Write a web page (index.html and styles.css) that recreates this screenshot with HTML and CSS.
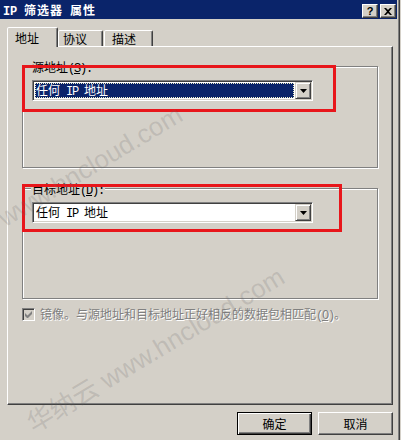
FILE: index.html
```html
<!DOCTYPE html>
<html lang="zh-CN">
<head>
<meta charset="utf-8">
<title>IP 筛选器 属性</title>
<link rel="stylesheet" href="styles.css">
</head>
<body>
<div class="window">
  <div class="titlebar">
    <span class="title"><span class="latin">IP </span>筛选器<span class="latin"> </span>属性</span>
    <div class="caption-btns">
      <span class="cbtn cbtn-help">?</span>
      <span class="cbtn cbtn-close"><svg width="8" height="7" viewBox="0 0 8 7"><path d="M0 0h2l2 2 2-2h2L5 3.5 8 7H6L4 5 2 7H0l3-3.5z" fill="#000"/></svg></span>
    </div>
  </div>
  <div class="content">
    <div class="tabs">
      <div class="tab tab-active t1">地址</div>
      <div class="tab t2">协议</div>
      <div class="tab t3">描述</div>
    </div>
    <div class="panel">
      <div class="group g1">
        <span class="legend">源地址<span class="latin">(<u>S</u>):</span></span>
        <div class="combo">
          <div class="field field-focused"><span class="value">任何<span class="latin"> IP </span>地址</span></div>
          <span class="dropbtn"><svg width="7" height="4" viewBox="0 0 7 4"><path d="M0 0h7L3.5 4z" fill="#000"/></svg></span>
        </div>
      </div>
      <div class="group g2">
        <span class="legend">目标地址<span class="latin">(<u>D</u>):</span></span>
        <div class="combo">
          <div class="field"><span class="value">任何<span class="latin"> IP </span>地址</span></div>
          <span class="dropbtn"><svg width="7" height="4" viewBox="0 0 7 4"><path d="M0 0h7L3.5 4z" fill="#000"/></svg></span>
        </div>
      </div>
      <div class="check-row">
        <span class="checkbox"><svg width="7" height="7" viewBox="0 0 7 7"><path d="M0 2v3l2 2h1l4-4V0L2.5 4.5z" fill="#808080"/></svg></span>
        <span class="check-label">镜像。与源地址和目标地址正好相反的数据包相匹配<span class="latin">(<u>O</u>)</span>。</span>
      </div>
    </div>
    <div class="actions">
      <button class="btn btn-default">确定</button>
      <button class="btn">取消</button>
    </div>
  </div>
  <div class="mark mark-1"></div>
  <div class="mark mark-2"></div>
  <span class="wm wm-1">www.hncloud.com</span>
  <span class="wm wm-2">华纳云 www.hncloud.com</span>
</div>
</body>
</html>
```
FILE: styles.css
```css
html, body {
  margin: 0;
  padding: 0;
  background: #d4d0c8;
}
body {
  font-family: "Noto Sans CJK SC", "Liberation Sans", sans-serif;
  font-size: 12px;
  color: #000;
}
.latin {
  font-family: "Liberation Mono", monospace;
  letter-spacing: -1.2px;
  white-space: pre;
}
.window {
  position: relative;
  width: 401px;
  height: 440px;
  overflow: hidden;
  background: #d4d0c8;
  box-shadow: inset -1px 0 0 #d4d0c8, inset -2px 0 0 #404040, inset -3px 0 0 #808080;
}
.titlebar {
  display: flex;
  justify-content: space-between;
  align-items: flex-start;
  height: 19px;
  margin-right: 4px;
  padding-left: 3px;
  padding-right: 1px;
  background: #0a246a;
}
.title {
  color: #fff;
  font-weight: bold;
  font-size: 12px;
  line-height: 19px;
  letter-spacing: 1px;
  white-space: nowrap;
}
.title .latin {
  letter-spacing: -0.2px;
}
.caption-btns {
  display: flex;
  gap: 2px;
  padding-top: 4px;
}
.cbtn {
  box-sizing: border-box;
  width: 16px;
  height: 14px;
  display: flex;
  align-items: center;
  justify-content: center;
  background: #d4d0c8;
  border: 1px solid;
  border-color: #fff #404040 #404040 #fff;
  box-shadow: inset -1px -1px 0 #808080;
  font-family: "Liberation Sans", sans-serif;
  font-weight: bold;
  font-size: 11px;
  line-height: 12px;
}
.content {
  padding-top: 8px;
}
.tabs {
  position: relative;
  z-index: 1;
  display: flex;
  align-items: flex-end;
  height: 20px;
  margin-left: 7px;
  margin-bottom: -1px;
}
.tab {
  box-sizing: border-box;
  height: 16px;
  margin-bottom: 1px;
  padding-top: 1px;
  background: #d4d0c8;
  border: 1px solid;
  border-bottom: none;
  border-color: #fff #404040 transparent #fff;
  border-radius: 2px 2px 0 0;
  box-shadow: inset -1px 0 0 #808080;
  line-height: 14px;
  white-space: nowrap;
}
.tab-active {
  height: 20px;
  margin-bottom: 0;
  padding-top: 3px;
}
.t1 { width: 51px; padding-left: 7px; }
.t2 { width: 45px; padding-left: 4px; }
.t3 { width: 49px; padding-left: 7px; margin-left: 1px; }
.panel {
  box-sizing: border-box;
  width: 386px;
  height: 359px;
  margin-left: 7px;
  padding: 19px 0 0 14px;
  border: 1px solid;
  border-color: #fff #404040 #404040 #fff;
  box-shadow: inset -1px -1px 0 #808080;
}
.group {
  box-sizing: border-box;
  width: 356px;
  border: 1px solid #808080;
  box-shadow: inset 1px 1px 0 #fff, 1px 1px 0 #fff;
}
.g1 { height: 102px; }
.g2 { height: 111px; margin-top: 20px; }
.legend {
  display: block;
  width: fit-content;
  margin: -7px 0 0 8px;
  padding: 0 1px;
  background: #d4d0c8;
  line-height: 13px;
  white-space: nowrap;
}
.combo {
  box-sizing: border-box;
  display: flex;
  width: 281px;
  height: 21px;
  margin: 4px 0 0 9px;
  padding: 1px;
  background: #fff;
  border: 1px solid;
  border-color: #808080 #fff #fff #808080;
  box-shadow: inset 1px 1px 0 #404040, inset -1px -1px 0 #d4d0c8;
}
.field {
  flex: 1;
  display: flex;
  align-items: center;
  margin: 1px;
  padding-left: 1px;
  line-height: 15px;
  white-space: nowrap;
}
.field-focused {
  background: #0a246a;
  color: #fff;
  outline: 1px dotted #f0f0c8;
  outline-offset: -1px;
}
.dropbtn {
  box-sizing: border-box;
  width: 16px;
  height: 17px;
  display: flex;
  align-items: center;
  justify-content: center;
  background: #d4d0c8;
  border: 1px solid;
  border-color: #d4d0c8 #404040 #404040 #d4d0c8;
  box-shadow: inset 1px 1px 0 #fff, inset -1px -1px 0 #808080;
}
.check-row {
  display: flex;
  align-items: center;
  gap: 5px;
  height: 13px;
  margin-top: 9px;
}
.checkbox {
  box-sizing: border-box;
  width: 13px;
  height: 13px;
  display: flex;
  align-items: center;
  justify-content: center;
  background: #d4d0c8;
  border: 1px solid;
  border-color: #808080 #fff #fff #808080;
  box-shadow: inset 1px 1px 0 #404040, inset -1px -1px 0 #d4d0c8;
}
.check-label {
  color: #808080;
  text-shadow: 1px 1px 0 #fff;
  line-height: 13px;
  white-space: nowrap;
}
.actions {
  display: flex;
  justify-content: flex-end;
  gap: 6px;
  margin-top: 7px;
  padding-right: 8px;
}
.btn {
  box-sizing: border-box;
  width: 75px;
  height: 23px;
  margin: 0;
  padding: 0;
  background: #d4d0c8;
  font-family: "Noto Sans CJK SC", "Liberation Sans", sans-serif;
  font-size: 12px;
  color: #000;
  border: 1px solid;
  border-color: #fff #404040 #404040 #fff;
  box-shadow: inset -1px -1px 0 #808080;
}
.btn-default {
  border-color: #000;
  box-shadow: inset 1px 1px 0 #fff, inset -1px -1px 0 #404040, inset -2px -2px 0 #808080;
}
.mark {
  position: absolute;
  box-sizing: border-box;
  border: 3px solid #e8161b;
  pointer-events: none;
}
.mark-1 { left: 22px; top: 65px; width: 314px; height: 47px; }
.mark-2 { left: 22px; top: 184px; width: 320px; height: 48px; }
.wm {
  position: absolute;
  font-family: "Liberation Sans", "Noto Sans CJK SC", sans-serif;
  font-size: 26px;
  line-height: 26px;
  color: rgba(100, 100, 100, 0.2);
  white-space: nowrap;
  transform-origin: 0 100%;
  transform: rotate(-31deg);
  pointer-events: none;
}
.wm-1 { left: 7px; top: 205px; }
.wm-2 { left: 36px; top: 411px; }
```
